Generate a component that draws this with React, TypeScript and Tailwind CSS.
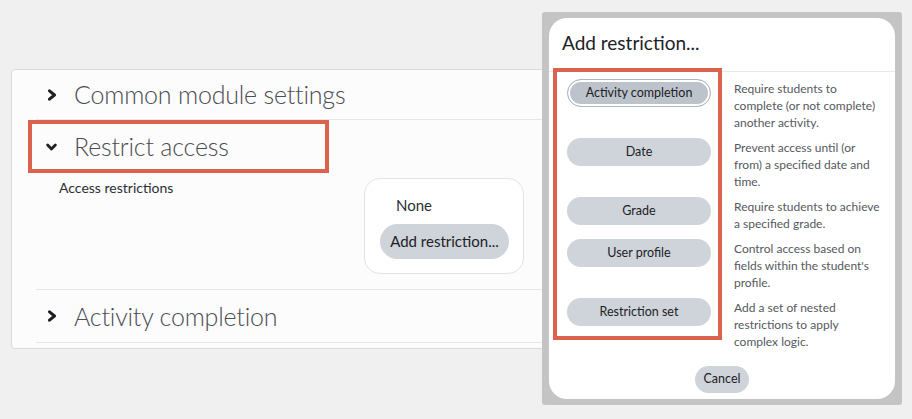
import React from "react";

const font = "font-['Lato','Liberation_Sans',sans-serif]";

const ChevronRight = () => (
  <svg viewBox="0 0 10 12" className="h-[12px] w-[10px]" fill="none" stroke="#1d2125" strokeWidth="3" strokeLinecap="round" strokeLinejoin="round">
    <path d="M2.5 1.8l5 4.2-5 4.2" />
  </svg>
);

const ChevronDown = () => (
  <svg viewBox="0 0 12 10" className="h-[10px] w-[12px]" fill="none" stroke="#1d2125" strokeWidth="3" strokeLinecap="round" strokeLinejoin="round">
    <path d="M1.8 2.8l4.2 4.4 4.2-4.4" />
  </svg>
);

const restrictions = [
  { label: "Activity completion", text: "Require students to complete (or not complete) another activity.", active: true },
  { label: "Date", text: "Prevent access until (or from) a specified date and time." },
  { label: "Grade", text: "Require students to achieve a specified grade." },
  { label: "User profile", text: "Control access based on fields within the student's profile." },
  { label: "Restriction set", text: "Add a set of nested restrictions to apply complex logic." },
];

const SectionHeader = ({ title, open }: { title: string; open?: boolean }) => (
  <div className="flex h-full items-center gap-[17px] pl-[10px]">
    <div className="flex w-[11px] justify-center">{open ? <ChevronDown /> : <ChevronRight />}</div>
    <div className="text-[25px] font-light leading-none tracking-[-0.2px] text-[#4a4d52]">{title}</div>
  </div>
);

const AddRestrictionModal = () => (
  <div className="absolute left-[542px] top-[12px] h-[393px] w-[360px] rounded-[3px] bg-[#c4c4c4] px-[7px] py-[6px]">
    <div className="flex h-full flex-col rounded-[18px] bg-white">
      <div className="flex h-[54px] shrink-0 items-center border-b border-[#e9e9e9] px-[13px] pb-[4px]">
        <h2 className="text-[19px] font-normal leading-none text-[#1d2125]">Add restriction...</h2>
      </div>
      <div className="relative flex flex-col gap-[7px] pt-[7px]">
        {restrictions.map((r) => (
          <div key={r.label} className="flex items-start">
            <div className="w-[185px] shrink-0 pl-[18px]">
              <button
                className={`h-[28px] w-[144px] rounded-full text-[12.5px] leading-none text-[#1d2125] ${
                  r.active ? "border border-[#aeb5bd] bg-[#bcc3cb] shadow-[inset_0_0_0_2px_white]" : "bg-[#ced4da]"
                }`}
              >
                {r.label}
              </button>
            </div>
            <p className="w-[150px] pt-[1px] text-[12px] leading-[17px] text-[#55595e]">{r.text}</p>
          </div>
        ))}
        <div className="pointer-events-none absolute left-[4px] top-[-4px] h-[272px] w-[169px] border-[4px] border-[#d9634c]" />
      </div>
      <div className="mt-auto flex justify-center pb-[6px]">
        <button className="h-[27px] w-[54px] rounded-full bg-[#ced4da] text-[12.5px] leading-none text-[#1d2125]">Cancel</button>
      </div>
    </div>
  </div>
);

export default function App() {
  return (
    <div className={`relative h-[419px] w-[912px] overflow-hidden bg-[#f0f0f0] pl-[11px] pt-[69px] ${font}`}>
      <div className="h-[280px] w-[560px] rounded-[4px] border border-[#dadada] bg-[#fcfcfc] pl-[24px]">
        <div className="h-[50px] border-b border-[#e6e6e6]">
          <SectionHeader title="Common module settings" />
        </div>
        <div className="relative h-[53px]">
          <SectionHeader title="Restrict access" open />
          <div className="pointer-events-none absolute left-[-8px] top-0 h-[53px] w-[301px] border-[4px] border-[#d9634c]" />
        </div>
        <div className="flex h-[117px] border-b border-[#e6e6e6] pt-[5px]">
          <div className="w-[328px] shrink-0 pl-[23px] pt-[1px] text-[14px] leading-[17px] text-[#2b2f33]">Access restrictions</div>
          <div className="flex h-[96px] w-[160px] flex-col items-start rounded-[16px] border border-[#e3e3e3] bg-white pl-[15px] pt-[17px]">
            <div className="pl-[16px] text-[15px] leading-[18px] text-[#2b2f33]">None</div>
            <button className="mt-[10px] h-[35px] w-[129px] rounded-full bg-[#ced4da] text-[15px] leading-none text-[#1d2125]">
              Add restriction...
            </button>
          </div>
        </div>
        <div className="h-[53px] border-b border-[#e6e6e6]">
          <SectionHeader title="Activity completion" />
        </div>
      </div>
      <AddRestrictionModal />
    </div>
  );
}
